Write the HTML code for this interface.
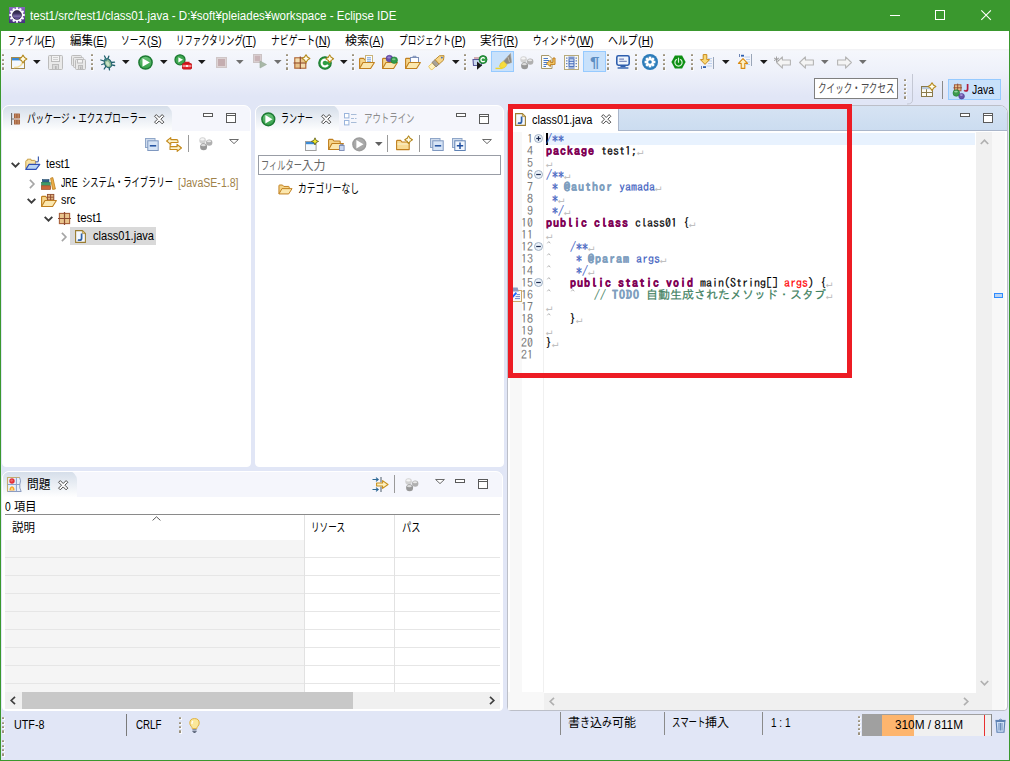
<!DOCTYPE html>
<html lang="ja">
<head>
<meta charset="utf-8">
<title>test1/src/test1/class01.java - Eclipse IDE</title>
<style>
*{box-sizing:border-box;margin:0;padding:0}
html,body{width:1010px;height:761px;overflow:hidden}
body{position:relative;background:#e1e6f6;font-family:"Liberation Sans","Noto Sans CJK JP",sans-serif;font-size:12px;color:#000}
.abs{position:absolute}
svg{position:absolute;overflow:visible}
.t{position:absolute;white-space:nowrap;line-height:16px;height:16px}
.r{display:inline-block;white-space:pre;transform-origin:0 50%;height:16px;vertical-align:top}
.panel{position:absolute;background:#fff;overflow:hidden}
.code{position:absolute;white-space:pre;font-family:"IPAGothic","Liberation Mono",monospace;font-size:12px;line-height:12px;height:12px;-webkit-text-stroke:0.2px}
.code b{letter-spacing:1px}
.kw{color:#7f0055}
.jd{color:#3f5fbf}
.jt{color:#7f9fbf}
.cm{color:#3f7f5f}
.pa{color:#ff0000}
.nl{color:#c0c0c0;font-size:11px}
.ln{color:#787878;-webkit-text-stroke:0}
.nl{-webkit-text-stroke:0}
</style>
</head>
<body>
<div class="abs" style="left:0px;top:0px;width:1010px;height:31px;background:#3a982e"></div>
<svg style="left:9px;top:7px" width="16" height="16" viewBox="0 0 16 16"><defs><linearGradient id="ecl" x1="0" y1="0" x2="0" y2="1"><stop offset="0" stop-color="#8468bc"/><stop offset="1" stop-color="#47307f"/></linearGradient><linearGradient id="ecl2" x1="0" y1="0" x2="0" y2="1"><stop offset="0" stop-color="#2a2240"/><stop offset="1" stop-color="#6a58a0"/></linearGradient></defs><rect width="16" height="16" fill="url(#ecl)"/><g transform="translate(8 8)"><rect x="-1.1" y="-7.7" width="2.2" height="3" fill="#fbfaff" transform="rotate(0)"/><rect x="-1.1" y="-7.7" width="2.2" height="3" fill="#fbfaff" transform="rotate(30)"/><rect x="-1.1" y="-7.7" width="2.2" height="3" fill="#fbfaff" transform="rotate(60)"/><rect x="-1.1" y="-7.7" width="2.2" height="3" fill="#fbfaff" transform="rotate(90)"/><rect x="-1.1" y="-7.7" width="2.2" height="3" fill="#fbfaff" transform="rotate(120)"/><rect x="-1.1" y="-7.7" width="2.2" height="3" fill="#fbfaff" transform="rotate(150)"/><rect x="-1.1" y="-7.7" width="2.2" height="3" fill="#fbfaff" transform="rotate(180)"/><rect x="-1.1" y="-7.7" width="2.2" height="3" fill="#fbfaff" transform="rotate(210)"/><rect x="-1.1" y="-7.7" width="2.2" height="3" fill="#fbfaff" transform="rotate(240)"/><rect x="-1.1" y="-7.7" width="2.2" height="3" fill="#fbfaff" transform="rotate(270)"/><rect x="-1.1" y="-7.7" width="2.2" height="3" fill="#fbfaff" transform="rotate(300)"/><rect x="-1.1" y="-7.7" width="2.2" height="3" fill="#fbfaff" transform="rotate(330)"/><circle r="6.2" fill="#fbfaff"/><circle r="4.5" fill="url(#ecl2)" stroke="#1e1830" stroke-width=".6"/><path d="M-4 0.2H4M-3.8 1.6H3.8" stroke="#9a8cc8" stroke-width=".6"/></g></svg>
<span class="t" style="left:30px;top:7.5px;color:#fff"><span class="r" style="width:366.5px;transform:scaleX(0.962)">test1/src/test1/class01.java - D:¥soft¥pleiades¥workspace - Eclipse IDE</span></span>
<svg style="left:890px;top:15px" width="11" height="1" viewBox="0 0 11 1"><rect width="10" height="1" fill="#fff"/></svg>
<svg style="left:935px;top:10px" width="10" height="10" viewBox="0 0 10 10"><rect x="0.5" y="0.5" width="9" height="9" fill="none" stroke="#fff"/></svg>
<svg style="left:981px;top:10px" width="10" height="10" viewBox="0 0 10 10"><path d="M0.3 0.3L9.9 9.9M9.9 0.3L0.3 9.9" stroke="#fff" stroke-width="1.1"/></svg>
<div class="abs" style="left:1px;top:31px;width:1008px;height:18px;background:#fff"></div>
<span class="t" style="left:7.5px;top:32.5px;"><span class="r" style="width:33.88px;transform:scaleX(0.706)">ファイル</span><span class="r" style="width:14.12px;transform:scaleX(0.920)">(<u>F</u>)</span></span>
<span class="t" style="left:70px;top:32.5px;"><span class="r" style="width:22.93px;transform:scaleX(0.955)">編集</span><span class="r" style="width:14.07px;transform:scaleX(0.878)">(<u>E</u>)</span></span>
<span class="t" style="left:121px;top:32.5px;"><span class="r" style="width:25.77px;transform:scaleX(0.728)">ソース</span><span class="r" style="width:14.73px;transform:scaleX(0.920)">(<u>S</u>)</span></span>
<span class="t" style="left:175.5px;top:32.5px;"><span class="r" style="width:66.88px;transform:scaleX(0.700)">リファクタリング</span><span class="r" style="width:14.12px;transform:scaleX(0.920)">(<u>T</u>)</span></span>
<span class="t" style="left:271px;top:32.5px;"><span class="r" style="width:44.16px;transform:scaleX(0.736)">ナビゲート</span><span class="r" style="width:15.34px;transform:scaleX(0.920)">(<u>N</u>)</span></span>
<span class="t" style="left:345px;top:32.5px;"><span class="r" style="width:24.17px;transform:scaleX(1.006)">検索</span><span class="r" style="width:14.83px;transform:scaleX(0.926)">(<u>A</u>)</span></span>
<span class="t" style="left:399px;top:32.5px;"><span class="r" style="width:51.77px;transform:scaleX(0.719)">プロジェクト</span><span class="r" style="width:14.73px;transform:scaleX(0.920)">(<u>P</u>)</span></span>
<span class="t" style="left:480px;top:32.5px;"><span class="r" style="width:23.49px;transform:scaleX(0.978)">実行</span><span class="r" style="width:15.01px;transform:scaleX(0.900)">(<u>R</u>)</span></span>
<span class="t" style="left:533px;top:32.5px;"><span class="r" style="width:42.72px;transform:scaleX(0.712)">ウィンドウ</span><span class="r" style="width:17.78px;transform:scaleX(0.920)">(<u>W</u>)</span></span>
<span class="t" style="left:608px;top:32.5px;"><span class="r" style="width:29.66px;transform:scaleX(0.824)">ヘルプ</span><span class="r" style="width:15.34px;transform:scaleX(0.920)">(<u>H</u>)</span></span>
<div class="abs" style="left:1px;top:49px;width:1008px;height:56px;background:linear-gradient(#f1f1f3 0,#f5f7fc 2px,#eef1fa 40%,#e1e6f6 85%)"></div>
<svg style="left:2px;top:54px" width="3" height="21" viewBox="0 0 3 21"><rect x="0.6" y="0.6" width="2.4" height="2.4" fill="#fafbfe"/><rect x="0" y="0" width="2" height="2" fill="#9a917e"/><rect x="0" y="0" width="2" height="0.8" fill="#b8b2a2"/><rect x="0.6" y="5.6" width="2.4" height="2.4" fill="#fafbfe"/><rect x="0" y="5" width="2" height="2" fill="#9a917e"/><rect x="0" y="5" width="2" height="0.8" fill="#b8b2a2"/><rect x="0.6" y="9.6" width="2.4" height="2.4" fill="#fafbfe"/><rect x="0" y="9" width="2" height="2" fill="#9a917e"/><rect x="0" y="9" width="2" height="0.8" fill="#b8b2a2"/><rect x="0.6" y="13.6" width="2.4" height="3.4" fill="#fafbfe"/><rect x="0" y="13" width="2" height="3" fill="#9a917e"/><rect x="0" y="13" width="2" height="0.8" fill="#b8b2a2"/></svg>
<svg style="left:10.5px;top:54.5px" width="16" height="16" viewBox="0 0 16 16"><rect x="0.5" y="2.5" width="13" height="11" fill="#f4f8fd" stroke="#a58a4a"/><rect x="1" y="3" width="12" height="2.4" fill="#3b8ad6"/><path d="M3 12.5C9 12.5 11.5 10 12 5.5" fill="none" stroke="#f3dd9a" stroke-width="1.6"/><g transform="translate(12 4)"><path d="M0 -3.8L1.5 -1.5L3.8 0L1.5 1.5L0 3.8L-1.5 1.5L-3.8 0L-1.5 -1.5Z" fill="#fbefb8" stroke="#b58a22" stroke-width="1.2" stroke-linejoin="round"/><path d="M0 -2.2V2.2M-2.2 0H2.2" stroke="#fffdf2" stroke-width="1.2"/></g></svg>
<svg style="left:33px;top:60px" width="8" height="4" viewBox="0 0 8 4"><path d="M0 0H7.6L3.8 4Z" fill="#1a1a1a"/></svg>
<svg style="left:48px;top:55px" width="15" height="15" viewBox="0 0 15 15"><path d="M1.5 0.5H13.5Q14.5 0.5 14.5 1.5V13.5Q14.5 14.5 13.5 14.5H1.5Q0.5 14.5 0.5 13.5V1.5Q0.5 0.5 1.5 0.5Z" fill="#e9e9e9" stroke="#bcbcbc"/><rect x="3.5" y="0.5" width="8" height="6" fill="#f3f3f3" stroke="#bcbcbc"/><path d="M5 2.5H10M5 4.5H10" stroke="#cfcfcf"/><rect x="4.5" y="9.5" width="6" height="5" fill="#dadada" stroke="#bcbcbc"/><rect x="7" y="11" width="1.6" height="3" fill="#b5b5b5"/></svg>
<svg style="left:71px;top:55px" width="15" height="15" viewBox="0 0 15 15"><g transform="translate(0 0)"><path d="M1.5 0.5H9.5Q10.5 0.5 10.5 1.5V9.5Q10.5 10.5 9.5 10.5H1.5Q0.5 10.5 0.5 9.5V1.5Q0.5 0.5 1.5 0.5Z" fill="#e9e9e9" stroke="#bcbcbc"/></g><g transform="translate(2 2)"><path d="M1.5 0.5H9.5Q10.5 0.5 10.5 1.5V9.5Q10.5 10.5 9.5 10.5H1.5Q0.5 10.5 0.5 9.5V1.5Q0.5 0.5 1.5 0.5Z" fill="#e9e9e9" stroke="#bcbcbc"/></g><g transform="translate(4 4)"><path d="M1.5 0.5H9.5Q10.5 0.5 10.5 1.5V9.5Q10.5 10.5 9.5 10.5H1.5Q0.5 10.5 0.5 9.5V1.5Q0.5 0.5 1.5 0.5Z" fill="#e9e9e9" stroke="#bcbcbc"/></g><rect x="6.5" y="4.5" width="5" height="3.5" fill="#f3f3f3" stroke="#bcbcbc"/><rect x="7.5" y="10.5" width="4" height="4" fill="#dadada" stroke="#bcbcbc"/><rect x="9" y="11.5" width="1.4" height="3" fill="#b5b5b5"/></svg>
<svg style="left:91px;top:54px" width="3" height="21" viewBox="0 0 3 21"><rect x="0.6" y="0.6" width="2.4" height="2.4" fill="#fafbfe"/><rect x="0" y="0" width="2" height="2" fill="#9a917e"/><rect x="0" y="0" width="2" height="0.8" fill="#b8b2a2"/><rect x="0.6" y="5.6" width="2.4" height="2.4" fill="#fafbfe"/><rect x="0" y="5" width="2" height="2" fill="#9a917e"/><rect x="0" y="5" width="2" height="0.8" fill="#b8b2a2"/><rect x="0.6" y="9.6" width="2.4" height="2.4" fill="#fafbfe"/><rect x="0" y="9" width="2" height="2" fill="#9a917e"/><rect x="0" y="9" width="2" height="0.8" fill="#b8b2a2"/><rect x="0.6" y="13.6" width="2.4" height="3.4" fill="#fafbfe"/><rect x="0" y="13" width="2" height="3" fill="#9a917e"/><rect x="0" y="13" width="2" height="0.8" fill="#b8b2a2"/></svg>
<svg style="left:99.5px;top:54.5px" width="16" height="16" viewBox="0 0 16 16"><g stroke="#1f5f6c" stroke-width="1.3" fill="none" stroke-linecap="round"><path d="M4.5 1L6 4M8.8 1.2L7.8 4"/><path d="M0.8 5L4.5 6.2M1.8 9.5L4.8 8.5M4.2 14L6 11.2"/><path d="M14.5 7.2L11.2 7.5M14.6 10.5L11.4 9.8M9.5 14.8L9 12"/></g><ellipse cx="8" cy="8.3" rx="3.4" ry="4.6" transform="rotate(-28 8 8.3)" fill="#86b492" stroke="#1f5f6c" stroke-width="1.1"/><ellipse cx="7.6" cy="8.6" rx="1.6" ry="2.6" transform="rotate(-28 8 8.3)" fill="#c9e2c4"/><circle cx="5.6" cy="4.4" r="1.5" fill="#3d7f86"/></svg>
<svg style="left:122px;top:60px" width="8" height="4" viewBox="0 0 8 4"><path d="M0 0H7.6L3.8 4Z" fill="#1a1a1a"/></svg>
<svg style="left:137.5px;top:54.5px" width="15.0" height="15.0" viewBox="0 0 15.0 15.0"><defs><linearGradient id="rg137" x1="0" y1="0" x2="0" y2="1"><stop offset="0" stop-color="#6cc47a"/><stop offset="1" stop-color="#35a04a"/></linearGradient></defs><circle cx="7.5" cy="7.5" r="6.6000000000000005" fill="url(#rg137)" stroke="#1c7a32" stroke-width="1.5"/><path d="M4.476 3.1799999999999997L11.82 7.5L4.476 11.82Z" fill="#fff"/></svg>
<svg style="left:160px;top:60px" width="8" height="4" viewBox="0 0 8 4"><path d="M0 0H7.6L3.8 4Z" fill="#1a1a1a"/></svg>
<svg style="left:174px;top:54px" width="18" height="15" viewBox="0 0 18 15"><circle cx="6" cy="5.8" r="5" fill="#3fa852" stroke="#1c7a32" stroke-width="1.3"/><path d="M4.4 3.2L9 5.8L4.4 8.4Z" fill="#fff"/><rect x="8.5" y="9.5" width="9" height="5.5" rx="1" fill="#e22128" stroke="#c1141a"/><path d="M11 9.5V8.3H15V9.5" fill="none" stroke="#d0181f" stroke-width="1.2"/><path d="M8.5 12H17.5" stroke="#fff" stroke-width="0.9"/><rect x="12.2" y="11" width="1.6" height="2" fill="#fff"/></svg>
<svg style="left:198px;top:60px" width="8" height="4" viewBox="0 0 8 4"><path d="M0 0H7.6L3.8 4Z" fill="#1a1a1a"/></svg>
<svg style="left:216px;top:57px" width="11" height="11" viewBox="0 0 11 11"><rect x="0.5" y="0.5" width="10" height="10" fill="#ddd3d4" stroke="#cfc6c7"/><rect x="2" y="2" width="7" height="7" fill="#c4adb0"/></svg>
<svg style="left:236px;top:60px" width="8" height="4" viewBox="0 0 8 4"><path d="M0 0H7.6L3.8 4Z" fill="#707070"/></svg>
<svg style="left:253px;top:54px" width="14" height="14" viewBox="0 0 14 14"><rect x="0.5" y="0.5" width="8" height="8" fill="#ddd3d4" stroke="#cbc3c4"/><rect x="1.8" y="1.8" width="5.4" height="5.4" fill="#c9b4b7"/><path d="M7 7L13.5 10.5L7 14Z" fill="#a9b8a8" stroke="#98a898" stroke-width=".6"/></svg>
<svg style="left:274px;top:60px" width="8" height="4" viewBox="0 0 8 4"><path d="M0 0H7.6L3.8 4Z" fill="#707070"/></svg>
<svg style="left:286px;top:54px" width="3" height="21" viewBox="0 0 3 21"><rect x="0.6" y="0.6" width="2.4" height="2.4" fill="#fafbfe"/><rect x="0" y="0" width="2" height="2" fill="#9a917e"/><rect x="0" y="0" width="2" height="0.8" fill="#b8b2a2"/><rect x="0.6" y="5.6" width="2.4" height="2.4" fill="#fafbfe"/><rect x="0" y="5" width="2" height="2" fill="#9a917e"/><rect x="0" y="5" width="2" height="0.8" fill="#b8b2a2"/><rect x="0.6" y="9.6" width="2.4" height="2.4" fill="#fafbfe"/><rect x="0" y="9" width="2" height="2" fill="#9a917e"/><rect x="0" y="9" width="2" height="0.8" fill="#b8b2a2"/><rect x="0.6" y="13.6" width="2.4" height="3.4" fill="#fafbfe"/><rect x="0" y="13" width="2" height="3" fill="#9a917e"/><rect x="0" y="13" width="2" height="0.8" fill="#b8b2a2"/></svg>
<svg style="left:294px;top:55px" width="16" height="14" viewBox="0 0 16 14"><rect x="0.8" y="2.8" width="11" height="10.4" fill="#e9c48c" stroke="#b06a3c" stroke-width="1.2"/><rect x="1.6" y="3.6" width="4" height="3.6" fill="#f3dcb0"/><rect x="7" y="8.6" width="4" height="3.8" fill="#f3dcb0"/><path d="M6.3 1.5V14M-0.5 8H12.5" stroke="#8e4a2e" stroke-width="1.1"/><g transform="translate(12 3.6)"><path d="M0 -3.8L1.5 -1.5L3.8 0L1.5 1.5L0 3.8L-1.5 1.5L-3.8 0L-1.5 -1.5Z" fill="#fbefb8" stroke="#b58a22" stroke-width="1.2" stroke-linejoin="round"/><path d="M0 -2.2V2.2M-2.2 0H2.2" stroke="#fffdf2" stroke-width="1.2"/></g></svg>
<svg style="left:318px;top:53.5px" width="17" height="16" viewBox="0 0 17 16"><circle cx="7" cy="9" r="6.2" fill="#2f9e44" stroke="#1a7a30" stroke-width="1.2"/><path d="M9.9 7.2A3.4 3.4 0 1 0 9.9 10.8" fill="none" stroke="#fff" stroke-width="2.1"/><g transform="translate(11.7 4.8)"><path d="M0 -3.8L1.5 -1.5L3.8 0L1.5 1.5L0 3.8L-1.5 1.5L-3.8 0L-1.5 -1.5Z" fill="#fbefb8" stroke="#b58a22" stroke-width="1.2" stroke-linejoin="round"/><path d="M0 -2.2V2.2M-2.2 0H2.2" stroke="#fffdf2" stroke-width="1.2"/></g></svg>
<svg style="left:340px;top:60px" width="8" height="4" viewBox="0 0 8 4"><path d="M0 0H7.6L3.8 4Z" fill="#1a1a1a"/></svg>
<svg style="left:352px;top:54px" width="3" height="21" viewBox="0 0 3 21"><rect x="0.6" y="0.6" width="2.4" height="2.4" fill="#fafbfe"/><rect x="0" y="0" width="2" height="2" fill="#9a917e"/><rect x="0" y="0" width="2" height="0.8" fill="#b8b2a2"/><rect x="0.6" y="5.6" width="2.4" height="2.4" fill="#fafbfe"/><rect x="0" y="5" width="2" height="2" fill="#9a917e"/><rect x="0" y="5" width="2" height="0.8" fill="#b8b2a2"/><rect x="0.6" y="9.6" width="2.4" height="2.4" fill="#fafbfe"/><rect x="0" y="9" width="2" height="2" fill="#9a917e"/><rect x="0" y="9" width="2" height="0.8" fill="#b8b2a2"/><rect x="0.6" y="13.6" width="2.4" height="3.4" fill="#fafbfe"/><rect x="0" y="13" width="2" height="3" fill="#9a917e"/><rect x="0" y="13" width="2" height="0.8" fill="#b8b2a2"/></svg>
<svg style="left:359px;top:55px" width="16" height="14" viewBox="0 0 16 14"><path d="M0.6 13.4V4.2Q0.6 3.4 1.4 3.4H4.6L6 5H11.4Q12.2 5 12.2 5.8V7.4" fill="#f6d58a" stroke="#c07f1e" stroke-width="1.1" stroke-linejoin="round"/><rect x="6.5" y="0.5" width="7" height="8.5" fill="#fdfdfd" stroke="#c9b37a"/><path d="M8 2.8H12M8 4.8H12M8 6.8H12" stroke="#4a86d6" stroke-width=".8"/><path d="M0.6 13.5L4 7.5H15.4L11.6 13.5Z" fill="#fbe7ae" stroke="#c07f1e" stroke-width="1.1" stroke-linejoin="round"/></svg>
<svg style="left:382px;top:55px" width="17" height="14" viewBox="0 0 17 14"><path d="M0.6 13.4V4.2Q0.6 3.4 1.4 3.4H4.6L6 5H11.4Q12.2 5 12.2 5.8V7.4" fill="#f6d58a" stroke="#c07f1e" stroke-width="1.1" stroke-linejoin="round"/><path d="M0.6 13.5L4 7.5H15.4L11.6 13.5Z" fill="#fbe7ae" stroke="#c07f1e" stroke-width="1.1" stroke-linejoin="round"/><circle cx="7.4" cy="3.6" r="3.3" fill="#6a4fb0" stroke="#4b3790" stroke-width=".6"/><ellipse cx="7" cy="2.6" rx="1.8" ry="1" fill="#a796dc" opacity=".8"/><circle cx="12.2" cy="5.2" r="3.3" fill="#2f9a4a" stroke="#1c7a32" stroke-width=".6"/><ellipse cx="11.8" cy="4.2" rx="1.8" ry="1" fill="#8ed09b" opacity=".8"/></svg>
<svg style="left:405px;top:55px" width="16" height="14" viewBox="0 0 16 14"><path d="M0.6 13.4V4.2Q0.6 3.4 1.4 3.4H4.6L6 5H11.4Q12.2 5 12.2 5.8V7.4" fill="#f6d58a" stroke="#c07f1e" stroke-width="1.1" stroke-linejoin="round"/><rect x="5.5" y="2.5" width="8" height="6" fill="#fdfdff" stroke="#7b8fb8"/><path d="M8 2.5V1.3H11V2.5" fill="none" stroke="#7b8fb8"/><path d="M0.6 13.5L4 7.5H15.4L11.6 13.5Z" fill="#fbe7ae" stroke="#c07f1e" stroke-width="1.1" stroke-linejoin="round"/></svg>
<svg style="left:429px;top:54px" width="17" height="15" viewBox="0 0 17 15"><g transform="rotate(-42 8 8)"><path d="M-1 5.6H4V10.4H-1Q-2.4 8 -1 5.6Z" fill="#fff3c4" stroke="#e8c25a" stroke-width=".8"/><rect x="4" y="5" width="4.2" height="6" fill="#a8a39b" stroke="#8a7a5c" stroke-width=".8"/><path d="M8.2 5H14L17.5 8L14 11H8.2Z" fill="#f7d58a" stroke="#b98a2e" stroke-width=".9"/><circle cx="14.6" cy="8" r="0.9" fill="#3d6fc0"/></g></svg>
<svg style="left:452px;top:60px" width="8" height="4" viewBox="0 0 8 4"><path d="M0 0H7.6L3.8 4Z" fill="#1a1a1a"/></svg>
<svg style="left:464px;top:54px" width="3" height="21" viewBox="0 0 3 21"><rect x="0.6" y="0.6" width="2.4" height="2.4" fill="#fafbfe"/><rect x="0" y="0" width="2" height="2" fill="#9a917e"/><rect x="0" y="0" width="2" height="0.8" fill="#b8b2a2"/><rect x="0.6" y="5.6" width="2.4" height="2.4" fill="#fafbfe"/><rect x="0" y="5" width="2" height="2" fill="#9a917e"/><rect x="0" y="5" width="2" height="0.8" fill="#b8b2a2"/><rect x="0.6" y="9.6" width="2.4" height="2.4" fill="#fafbfe"/><rect x="0" y="9" width="2" height="2" fill="#9a917e"/><rect x="0" y="9" width="2" height="0.8" fill="#b8b2a2"/><rect x="0.6" y="13.6" width="2.4" height="3.4" fill="#fafbfe"/><rect x="0" y="13" width="2" height="3" fill="#9a917e"/><rect x="0" y="13" width="2" height="0.8" fill="#b8b2a2"/></svg>
<svg style="left:472px;top:54.5px" width="16" height="15" viewBox="0 0 16 15"><path d="M1 4.5H9.5V10.5H1.5Z" fill="#c9d7f0" stroke="#5a5a9a" stroke-width="1.1"/><path d="M2 3H8.5" stroke="#c99aa0" stroke-width="1.6"/><path d="M5 6.5L10 10.5L5 14.8Z" fill="#1a1a1a"/><circle cx="11" cy="4.6" r="4" fill="#2f9e44" stroke="#1a7a30" stroke-width=".9"/><path d="M12.6 3.6A2 2 0 1 0 12.6 5.8" fill="none" stroke="#fff" stroke-width="1.3"/></svg>
<div class="abs" style="left:491px;top:51px;width:23px;height:21px;background:#c8e1fb;border:1px solid #96caff"></div>
<svg style="left:494.5px;top:53px" width="18" height="17" viewBox="0 0 18 17"><path d="M15.5 0.5L16.5 9.5L11.5 11.2L8.5 8.2Z" fill="#8f8a80" stroke="#a49f94" stroke-width=".6"/><path d="M13 4L14.5 9" stroke="#bdb8ad" stroke-width="1"/><path d="M8.5 8.2L11.8 11.4Q10.5 15.5 6.5 15.2L4.4 13.4Q5 9.8 8.5 8.2Z" fill="#f6dc3c" stroke="#e2c324" stroke-width=".6"/><path d="M0.5 15.4H7.5" stroke="#f0d22a" stroke-width="1.4"/></svg>
<svg style="left:519.5px;top:55.5px" width="14" height="14" viewBox="0 0 14 14"><circle cx="3.6" cy="3.6" r="3.3" fill="#d2d2d2"/><ellipse cx="3.4" cy="2.4" rx="2.2" ry="1.1" fill="#f6f6f6"/><circle cx="10.2" cy="5.6" r="3.2" fill="#b0b0b0"/><ellipse cx="10" cy="4.2" rx="2.1" ry="1" fill="#e8e8e8"/><circle cx="4.6" cy="9.8" r="3.5" fill="#989898"/><ellipse cx="4.4" cy="8.2" rx="2.4" ry="1.1" fill="#dcdcdc"/></svg>
<svg style="left:540.5px;top:54.5px" width="16" height="15" viewBox="0 0 16 15"><path d="M0.5 0.5H8L11 3.5V13.5H0.5Z" fill="#fbfbf6" stroke="#a8986a"/><path d="M2.5 3.5H7M2.5 5.5H8M2.5 7.5H6M2.5 9.5H6M2.5 11.5H5" stroke="#4a7ac8" stroke-width="1"/><path d="M14 3V9.4H9.4V11.6L5.6 8.4L9.4 5.2V7.4H12V3Z" fill="#f7d070" stroke="#c07f1e" stroke-width="1" stroke-linejoin="round"/></svg>
<svg style="left:564px;top:55px" width="15" height="15" viewBox="0 0 15 15"><rect x="0.5" y="0.5" width="14" height="14" fill="#fbfaf4" stroke="#b7aa7c"/><path d="M2.8 2.5V13M12.2 2.5V13" stroke="#3f67b8" stroke-width="1.2" stroke-dasharray="1.2 1.6"/><rect x="5" y="3.8" width="5" height="7.6" fill="#dfe8f8" stroke="#3f67b8" stroke-width="1"/><path d="M5 6.3H10M5 8.8H10M4.4 2.2H10.6M4.4 13H10.6" stroke="#3f67b8" stroke-width="1"/></svg>
<div class="abs" style="left:583px;top:51px;width:23px;height:21px;background:#c8e1fb;border:1px solid #96caff"></div>
<span class="t" style="left:590px;top:54px;color:#5c8ec2;font-weight:bold;font-size:14px"><span class="r" style="width:9.5px;transform:scaleX(1.218)">¶</span></span>
<svg style="left:607px;top:54px" width="3" height="21" viewBox="0 0 3 21"><rect x="0.6" y="0.6" width="2.4" height="2.4" fill="#fafbfe"/><rect x="0" y="0" width="2" height="2" fill="#9a917e"/><rect x="0" y="0" width="2" height="0.8" fill="#b8b2a2"/><rect x="0.6" y="5.6" width="2.4" height="2.4" fill="#fafbfe"/><rect x="0" y="5" width="2" height="2" fill="#9a917e"/><rect x="0" y="5" width="2" height="0.8" fill="#b8b2a2"/><rect x="0.6" y="9.6" width="2.4" height="2.4" fill="#fafbfe"/><rect x="0" y="9" width="2" height="2" fill="#9a917e"/><rect x="0" y="9" width="2" height="0.8" fill="#b8b2a2"/><rect x="0.6" y="13.6" width="2.4" height="3.4" fill="#fafbfe"/><rect x="0" y="13" width="2" height="3" fill="#9a917e"/><rect x="0" y="13" width="2" height="0.8" fill="#b8b2a2"/></svg>
<svg style="left:616px;top:55px" width="14" height="14" viewBox="0 0 14 14"><rect x="0.8" y="0.8" width="12.4" height="9.4" rx="1.6" fill="#eef4fc" stroke="#2f5fae" stroke-width="1.6"/><path d="M3.2 4.1H8M3.2 6.3H10.8" stroke="#3a4f9a" stroke-width=".8"/><path d="M4.8 10.6H9.2L9.8 12.2H4.2Z" fill="#2f5fae"/><path d="M1.6 13H12.4" stroke="#2f5fae" stroke-width="1.4"/></svg>
<svg style="left:635px;top:54px" width="3" height="21" viewBox="0 0 3 21"><rect x="0.6" y="0.6" width="2.4" height="2.4" fill="#fafbfe"/><rect x="0" y="0" width="2" height="2" fill="#9a917e"/><rect x="0" y="0" width="2" height="0.8" fill="#b8b2a2"/><rect x="0.6" y="5.6" width="2.4" height="2.4" fill="#fafbfe"/><rect x="0" y="5" width="2" height="2" fill="#9a917e"/><rect x="0" y="5" width="2" height="0.8" fill="#b8b2a2"/><rect x="0.6" y="9.6" width="2.4" height="2.4" fill="#fafbfe"/><rect x="0" y="9" width="2" height="2" fill="#9a917e"/><rect x="0" y="9" width="2" height="0.8" fill="#b8b2a2"/><rect x="0.6" y="13.6" width="2.4" height="3.4" fill="#fafbfe"/><rect x="0" y="13" width="2" height="3" fill="#9a917e"/><rect x="0" y="13" width="2" height="0.8" fill="#b8b2a2"/></svg>
<svg style="left:642px;top:54px" width="16" height="16" viewBox="0 0 16 16"><circle cx="8" cy="8" r="8" fill="#2c7cba"/><g transform="translate(8 8)"><rect x="-1.3" y="-5.4" width="2.6" height="3" fill="#fff" transform="rotate(0)"/><rect x="-1.3" y="-5.4" width="2.6" height="3" fill="#fff" transform="rotate(45)"/><rect x="-1.3" y="-5.4" width="2.6" height="3" fill="#fff" transform="rotate(90)"/><rect x="-1.3" y="-5.4" width="2.6" height="3" fill="#fff" transform="rotate(135)"/><rect x="-1.3" y="-5.4" width="2.6" height="3" fill="#fff" transform="rotate(180)"/><rect x="-1.3" y="-5.4" width="2.6" height="3" fill="#fff" transform="rotate(225)"/><rect x="-1.3" y="-5.4" width="2.6" height="3" fill="#fff" transform="rotate(270)"/><rect x="-1.3" y="-5.4" width="2.6" height="3" fill="#fff" transform="rotate(315)"/><circle r="3.7" fill="#fff"/><circle r="1.8" fill="#2c7cba"/></g></svg>
<svg style="left:663px;top:54px" width="3" height="21" viewBox="0 0 3 21"><rect x="0.6" y="0.6" width="2.4" height="2.4" fill="#fafbfe"/><rect x="0" y="0" width="2" height="2" fill="#9a917e"/><rect x="0" y="0" width="2" height="0.8" fill="#b8b2a2"/><rect x="0.6" y="5.6" width="2.4" height="2.4" fill="#fafbfe"/><rect x="0" y="5" width="2" height="2" fill="#9a917e"/><rect x="0" y="5" width="2" height="0.8" fill="#b8b2a2"/><rect x="0.6" y="9.6" width="2.4" height="2.4" fill="#fafbfe"/><rect x="0" y="9" width="2" height="2" fill="#9a917e"/><rect x="0" y="9" width="2" height="0.8" fill="#b8b2a2"/><rect x="0.6" y="13.6" width="2.4" height="3.4" fill="#fafbfe"/><rect x="0" y="13" width="2" height="3" fill="#9a917e"/><rect x="0" y="13" width="2" height="0.8" fill="#b8b2a2"/></svg>
<svg style="left:670.5px;top:55px" width="15" height="14" viewBox="0 0 15 14"><path d="M3.9 0.5H11.1L14.6 7L11.1 13.5H3.9L0.4 7Z" fill="#0e8f14"/><path d="M5.4 4.6A3.6 3.6 0 1 0 9.6 4.6" fill="none" stroke="#d8f5d8" stroke-width="1.2" stroke-linecap="round"/><path d="M7.5 3V7.2" stroke="#d8f5d8" stroke-width="1.2" stroke-linecap="round"/></svg>
<svg style="left:691px;top:54px" width="3" height="21" viewBox="0 0 3 21"><rect x="0.6" y="0.6" width="2.4" height="2.4" fill="#fafbfe"/><rect x="0" y="0" width="2" height="2" fill="#9a917e"/><rect x="0" y="0" width="2" height="0.8" fill="#b8b2a2"/><rect x="0.6" y="5.6" width="2.4" height="2.4" fill="#fafbfe"/><rect x="0" y="5" width="2" height="2" fill="#9a917e"/><rect x="0" y="5" width="2" height="0.8" fill="#b8b2a2"/><rect x="0.6" y="9.6" width="2.4" height="2.4" fill="#fafbfe"/><rect x="0" y="9" width="2" height="2" fill="#9a917e"/><rect x="0" y="9" width="2" height="0.8" fill="#b8b2a2"/><rect x="0.6" y="13.6" width="2.4" height="3.4" fill="#fafbfe"/><rect x="0" y="13" width="2" height="3" fill="#9a917e"/><rect x="0" y="13" width="2" height="0.8" fill="#b8b2a2"/></svg>
<svg style="left:700px;top:54px" width="15" height="15" viewBox="0 0 15 15"><path d="M13.5 3V15" stroke="#9aa6b8" stroke-width="1"/><path d="M8 4.5H12M8 7H12M8 9.5H12M6.5 12H12" stroke="#bcd0ee" stroke-width="1"/><path d="M1.5 12V15" stroke="#6f86b4"/><rect x="3" y="12.2" width="3" height="1.8" fill="#2f5fae"/><path d="M3.2 0.6H6.8V5.6H9.6L5 10.4L0.4 5.6H3.2Z" fill="#f9d978" stroke="#c98a1a" stroke-width="1" stroke-linejoin="round"/></svg>
<svg style="left:722px;top:60px" width="8" height="4" viewBox="0 0 8 4"><path d="M0 0H7.6L3.8 4Z" fill="#1a1a1a"/></svg>
<svg style="left:738px;top:54px" width="15" height="15" viewBox="0 0 15 15"><path d="M13.5 0V12" stroke="#9aa6b8" stroke-width="1"/><path d="M6.5 3H12M8 5.5H12M8 8H12M8 10.5H12" stroke="#bcd0ee" stroke-width="1"/><path d="M1.5 0V3" stroke="#6f86b4"/><rect x="3" y="0.8" width="3" height="1.8" fill="#2f5fae"/><path d="M3.2 14.4H6.8V9.4H9.6L5 4.6L0.4 9.4H3.2Z" fill="#fdf1c8" stroke="#d98a10" stroke-width="1.1" stroke-linejoin="round"/></svg>
<svg style="left:760px;top:60px" width="8" height="4" viewBox="0 0 8 4"><path d="M0 0H7.6L3.8 4Z" fill="#1a1a1a"/></svg>
<svg style="left:774px;top:55.5px" width="17" height="13" viewBox="0 0 17 13"><g transform="translate(2 0)"><path d="M0.6 6.5L6.4 0.8V4H14.4V9H6.4V12.2Z" fill="#f4f4f4" stroke="#b4b4b4" stroke-width="1.1" stroke-linejoin="round"/></g><path d="M2.5 0.5V6M0 2L5 4.6M5 2L0 4.6" stroke="#9a9a9a" stroke-width=".9"/></svg>
<svg style="left:798.5px;top:55.5px" width="17" height="13" viewBox="0 0 17 13"><path d="M0.6 6.5L6.4 0.8V4H14.4V9H6.4V12.2Z" fill="#f4f4f4" stroke="#b4b4b4" stroke-width="1.1" stroke-linejoin="round"/></svg>
<svg style="left:821px;top:60px" width="8" height="4" viewBox="0 0 8 4"><path d="M0 0H7.6L3.8 4Z" fill="#707070"/></svg>
<svg style="left:836.5px;top:55.5px" width="17" height="13" viewBox="0 0 17 13"><g transform="translate(15 0) scale(-1 1)"><path d="M0.6 6.5L6.4 0.8V4H14.4V9H6.4V12.2Z" fill="#f4f4f4" stroke="#b4b4b4" stroke-width="1.1" stroke-linejoin="round"/></g></svg>
<svg style="left:859px;top:60px" width="8" height="4" viewBox="0 0 8 4"><path d="M0 0H7.6L3.8 4Z" fill="#707070"/></svg>
<div class="abs" style="left:814px;top:78px;width:84px;height:21px;background:#fff;border:1px solid #7f7f7f"></div>
<span class="t" style="left:818px;top:80.5px;color:#4a4a4a"><span class="r" style="width:76.5px;transform:scaleX(0.714)">クイック・アクセス</span></span>
<svg style="left:904px;top:79px" width="3" height="25" viewBox="0 0 3 25"><rect x="0.6" y="0.6" width="2.4" height="2.4" fill="#fafbfe"/><rect x="0" y="0" width="2" height="2" fill="#9a917e"/><rect x="0" y="0" width="2" height="0.8" fill="#b8b2a2"/><rect x="0.6" y="5.6" width="2.4" height="2.4" fill="#fafbfe"/><rect x="0" y="5" width="2" height="2" fill="#9a917e"/><rect x="0" y="5" width="2" height="0.8" fill="#b8b2a2"/><rect x="0.6" y="9.6" width="2.4" height="2.4" fill="#fafbfe"/><rect x="0" y="9" width="2" height="2" fill="#9a917e"/><rect x="0" y="9" width="2" height="0.8" fill="#b8b2a2"/><rect x="0.6" y="13.6" width="2.4" height="2.4" fill="#fafbfe"/><rect x="0" y="13" width="2" height="2" fill="#9a917e"/><rect x="0" y="13" width="2" height="0.8" fill="#b8b2a2"/><rect x="0.6" y="17.6" width="2.4" height="3.4" fill="#fafbfe"/><rect x="0" y="17" width="2" height="3" fill="#9a917e"/><rect x="0" y="17" width="2" height="0.8" fill="#b8b2a2"/></svg>
<svg style="left:907px;top:74px" width="6" height="30" viewBox="0 0 6 30"><path d="M5.5 0V26Q5.5 30 0 30" fill="none" stroke="#c4c8d4" stroke-width="1"/></svg>
<svg style="left:920.5px;top:83px" width="15" height="14" viewBox="0 0 15 14"><rect x="0.5" y="3.5" width="11" height="10" fill="#fbfaf2" stroke="#8a7a4a"/><rect x="1" y="4" width="10" height="2.2" fill="#b8c8dc"/><path d="M0.5 9.5H11.5M5.5 6.2V13.5" stroke="#8a7a4a"/><g transform="translate(11 3.6)"><path d="M0 -3.8L1.5 -1.5L3.8 0L1.5 1.5L0 3.8L-1.5 1.5L-3.8 0L-1.5 -1.5Z" fill="#fbefb8" stroke="#b58a22" stroke-width="1.2" stroke-linejoin="round"/><path d="M0 -2.2V2.2M-2.2 0H2.2" stroke="#fffdf2" stroke-width="1.2"/></g></svg>
<div class="abs" style="left:942px;top:81px;width:1px;height:18px;background:#8a8a8a"></div>
<div class="abs" style="left:948px;top:79px;width:53px;height:21px;background:#c8e1fb;border:1px solid #96caff"></div>
<svg style="left:951.5px;top:81.5px" width="18" height="17" viewBox="0 0 18 17"><rect x="2.4" y="2.8" width="6.6" height="6" fill="#e8c08c" stroke="#9a5030" stroke-width=".9"/><path d="M5.7 1.6V9.8M1.4 5.8H10" stroke="#8e4a2e" stroke-width=".9"/><circle cx="4.3" cy="11" r="3.3" fill="#3c9a4e" stroke="#1c7a32" stroke-width=".6"/><ellipse cx="4" cy="9.6" rx="1.9" ry=".9" fill="#a4dcae" opacity=".85"/><circle cx="9.6" cy="14.2" r="2.8" fill="#6a55a8" stroke="#4b3790" stroke-width=".6"/><ellipse cx="9.3" cy="13.1" rx="1.6" ry=".8" fill="#b4a6e0" opacity=".85"/><path d="M15.6 2V7Q15.6 9 13.8 9Q12.8 9 12.2 8.2" fill="none" stroke="#b01c3c" stroke-width="1.7"/></svg>
<span class="t" style="left:972px;top:81.5px;"><span class="r" style="width:22px;transform:scaleX(0.868)">Java</span></span>
<div class="panel" style="left:2px;top:105px;width:249px;height:362px;border-radius:7px 7px 4px 4px;border:1px solid #fff"><div class="abs" style="left:0;top:0;right:0;height:25px;background:#f5f6fc"></div><div class="abs" style="left:-1px;top:-1px;width:170px;height:27px;background:linear-gradient(#d4dde9,#fff 98%);border-radius:7px 9px 0 0"></div></div>
<svg style="left:11px;top:113px" width="9" height="12" viewBox="0 0 9 12"><path d="M0.6 0V12" stroke="#6a6a6a" stroke-width="1.1"/><path d="M0.6 6H3" stroke="#6a6a6a"/><rect x="3.4" y="1" width="5" height="4" fill="#d9a77a" stroke="#a05a34" stroke-width=".9"/><rect x="3.4" y="7" width="5" height="4" fill="#d9a77a" stroke="#a05a34" stroke-width=".9"/><path d="M5.9 1V5M5.9 7V11M3.4 3H8.4M3.4 9H8.4" stroke="#8e4a2e" stroke-width=".7"/></svg>
<span class="t" style="left:27px;top:111px;"><span class="r" style="width:119.5px;transform:scaleX(0.714)">パッケージ・エクスプローラー</span></span>
<svg style="left:153.6px;top:113.8px" width="10.4" height="10.4" viewBox="0 0 11 11"><path d="M0.6 2.4L2.4 0.6L5.5 3.7L8.6 0.6L10.4 2.4L7.3 5.5L10.4 8.6L8.6 10.4L5.5 7.3L2.4 10.4L0.6 8.6L3.7 5.5Z" fill="#fff" stroke="#484848" stroke-width="1.05" stroke-linejoin="miter"/></svg>
<svg style="left:203px;top:112.5px" width="10" height="4" viewBox="0 0 10 4"><rect x="0.5" y="0.5" width="9" height="3" fill="#fff" stroke="#5a5a5a"/></svg>
<svg style="left:226px;top:113px" width="10" height="10" viewBox="0 0 10 10"><rect x="0.5" y="0.5" width="9" height="9" fill="#fff" stroke="#5a5a5a"/><path d="M0.5 2.5H9.5" stroke="#5a5a5a"/></svg>
<svg style="left:144.8px;top:137.7px" width="14" height="13" viewBox="0 0 14 13"><rect x="0.5" y="0.5" width="9.5" height="9" fill="#cfdcee" stroke="#8fa6c8"/><rect x="2.8" y="2.8" width="10.4" height="9.7" fill="#d6e4f6" stroke="#7f98c0"/><path d="M4.8 7.8H11.2" stroke="#1f4f9f" stroke-width="1.5"/></svg>
<svg style="left:166.3px;top:136.6px" width="16" height="15" viewBox="0 0 16 15"><path d="M0.6 4L4.8 0.6V2.6H10.4Q12 2.6 12 4.2V5.4H4.8V7.4Z" fill="#fdf3cc" stroke="#c48a1c" stroke-width="1.05" stroke-linejoin="round"/><path d="M15.4 11L11.2 7.6V9.6H5.6Q4 9.6 4 8V7.2" fill="none" stroke="#c48a1c" stroke-width="1.05"/><path d="M15.4 11L11.2 7.6V9.6H4V12.4H11.2V14.4Z" fill="#fdf3cc" stroke="#c48a1c" stroke-width="1.05" stroke-linejoin="round"/></svg>
<div class="abs" style="left:188px;top:135px;width:1px;height:17px;background:#9a9a9a"></div>
<svg style="left:198.6px;top:137.4px" width="14" height="14" viewBox="0 0 14 14"><circle cx="3.6" cy="3.6" r="3.3" fill="#d2d2d2"/><ellipse cx="3.4" cy="2.4" rx="2.2" ry="1.1" fill="#f6f6f6"/><circle cx="10.2" cy="5.6" r="3.2" fill="#b0b0b0"/><ellipse cx="10" cy="4.2" rx="2.1" ry="1" fill="#e8e8e8"/><circle cx="4.6" cy="9.8" r="3.5" fill="#989898"/><ellipse cx="4.4" cy="8.2" rx="2.4" ry="1.1" fill="#dcdcdc"/></svg>
<svg style="left:229px;top:138.9px" width="10" height="5" viewBox="0 0 10 5"><path d="M0.6 0.5H9.4L5 4.6Z" fill="#fff" stroke="#5a5a5a" stroke-width=".9" stroke-linejoin="round"/></svg>
<svg style="left:11px;top:161.5px" width="9" height="6" viewBox="0 0 9 6"><path d="M0.7 0.9L4.5 4.7L8.3 0.9" fill="none" stroke="#3c3c3c" stroke-width="1.9"/></svg>
<svg style="left:24.5px;top:156px" width="16" height="14" viewBox="0 0 16 14"><path d="M0.8 12.6V5.2Q0.8 4.4 1.6 4.4H2.4V3.2H6V4.4H9.6Q10.4 4.4 10.4 5.2V8" fill="#f8e2a4" stroke="#c9a048" stroke-width="1" stroke-linejoin="round"/><path d="M0.8 13.4L4 8.4H14.8L11 13.4Z" fill="#b9d4f4" stroke="#2f4fb4" stroke-width="1.1" stroke-linejoin="round"/><path d="M13.4 0.4V4.4Q13.4 6 11.8 6Q11 6 10.6 5.4" fill="none" stroke="#3f5fb0" stroke-width="1.2"/></svg>
<span class="t" style="left:45.5px;top:156px;"><span class="r" style="width:24px;transform:scaleX(0.923)">test1</span></span>
<svg style="left:28.5px;top:178.5px" width="6" height="10" viewBox="0 0 6 10"><path d="M0.9 0.8L4.9 5L0.9 9.2" fill="none" stroke="#a6a6a6" stroke-width="1.7"/></svg>
<svg style="left:41px;top:176.5px" width="15" height="13" viewBox="0 0 15 13"><rect x="1.4" y="2.6" width="6.6" height="2.6" fill="#2f5f8a" stroke="#244a6a" stroke-width=".6"/><rect x="0.6" y="5.4" width="8.6" height="3" fill="#3f9a6a" stroke="#2a7a4a" stroke-width=".6"/><rect x="0.4" y="8.8" width="9.2" height="3.6" fill="#c8663a" stroke="#9a4a24" stroke-width=".7"/><path d="M9.6 1.2L11.8 0.6L14.4 12L11.6 12.4Z" fill="#eeb04a" stroke="#b87a1a" stroke-width=".8" stroke-linejoin="round"/></svg>
<span class="t" style="left:61px;top:174.5px;"><span class="r" style="width:16.5px;transform:scaleX(0.728)">JRE</span></span>
<span class="t" style="left:82px;top:174.5px;"><span class="r" style="width:91px;transform:scaleX(0.691)">システム・ライブラリー</span></span>
<span class="t" style="left:177.5px;top:174.5px;color:#a0824a"><span class="r" style="width:60.5px;transform:scaleX(0.881)">[JavaSE-1.8]</span></span>
<svg style="left:27px;top:197.5px" width="9" height="6" viewBox="0 0 9 6"><path d="M0.7 0.9L4.5 4.7L8.3 0.9" fill="none" stroke="#3c3c3c" stroke-width="1.9"/></svg>
<svg style="left:41px;top:193px" width="16" height="14" viewBox="0 0 16 14"><path d="M0.6 13.4V4.2Q0.6 3.4 1.4 3.4H4.6L6 5H11.4Q12.2 5 12.2 5.8V7.4" fill="#f6d58a" stroke="#c07f1e" stroke-width="1.1" stroke-linejoin="round"/><g stroke="#8e4a2e" stroke-width=".9" fill="#e4b884"><rect x="6.4" y="1.4" width="6.4" height="5.6"/><path d="M9.6 1.4V7M6.4 4.2H12.8" fill="none"/></g><path d="M0.6 13.5L4 7.5H15.4L11.6 13.5Z" fill="#fbe7ae" stroke="#c07f1e" stroke-width="1.1" stroke-linejoin="round"/></svg>
<span class="t" style="left:61px;top:192px;"><span class="r" style="width:14.5px;transform:scaleX(0.906)">src</span></span>
<svg style="left:43.5px;top:215.5px" width="9" height="6" viewBox="0 0 9 6"><path d="M0.7 0.9L4.5 4.7L8.3 0.9" fill="none" stroke="#3c3c3c" stroke-width="1.9"/></svg>
<svg style="left:57.5px;top:211.5px" width="13" height="13" viewBox="0 0 13 13"><rect x="1.4" y="1.4" width="10.2" height="10.2" fill="#e9c48c" stroke="#a8603a" stroke-width="1.1"/><path d="M6.5 0V13M0 6.5H13" stroke="#8e4a2e" stroke-width="1.2"/></svg>
<span class="t" style="left:77px;top:210px;"><span class="r" style="width:25px;transform:scaleX(0.961)">test1</span></span>
<svg style="left:61px;top:232px" width="6" height="10" viewBox="0 0 6 10"><path d="M0.9 0.8L4.9 5L0.9 9.2" fill="none" stroke="#a6a6a6" stroke-width="1.7"/></svg>
<div class="abs" style="left:70px;top:227px;width:86px;height:18px;background:#d9d9d9"></div>
<svg style="left:74.5px;top:229.5px" width="11" height="13" viewBox="0 0 11 13"><path d="M0.6 0.6H7.4L10.4 3.6V12.4H0.6Z" fill="#f4f8fe" stroke="#9a7c30" stroke-width="1.1"/><path d="M7.4 0.6V3.6H10.4Z" fill="#e8c878" stroke="#9a7c30" stroke-width=".6"/><path d="M6.6 3.6V8.2Q6.6 10.2 4.6 10.2Q3.6 10.2 3 9.6" fill="none" stroke="#2f62a8" stroke-width="1.7"/></svg>
<span class="t" style="left:93px;top:228px;"><span class="r" style="width:61px;transform:scaleX(0.924)">class01.java</span></span>
<div class="panel" style="left:255px;top:105px;width:249px;height:362px;border-radius:7px 7px 4px 4px;border:1px solid #fff"><div class="abs" style="left:0;top:0;right:0;height:25px;background:#f5f6fc"></div><div class="abs" style="left:-1px;top:-1px;width:84px;height:27px;background:linear-gradient(#d4dde9,#fff 98%);border-radius:7px 9px 0 0"></div></div>
<svg style="left:260.5px;top:111.5px" width="14.6" height="14.6" viewBox="0 0 14.6 14.6"><defs><linearGradient id="rg260" x1="0" y1="0" x2="0" y2="1"><stop offset="0" stop-color="#6cc47a"/><stop offset="1" stop-color="#35a04a"/></linearGradient></defs><circle cx="7.3" cy="7.3" r="6.4" fill="url(#rg260)" stroke="#1c7a32" stroke-width="1.5"/><path d="M4.359999999999999 3.0999999999999996L11.5 7.3L4.359999999999999 11.5Z" fill="#fff"/></svg>
<span class="t" style="left:280.5px;top:111px;"><span class="r" style="width:32px;transform:scaleX(0.666)">ランナー</span></span>
<svg style="left:320.6px;top:113.8px" width="10.4" height="10.4" viewBox="0 0 11 11"><path d="M0.6 2.4L2.4 0.6L5.5 3.7L8.6 0.6L10.4 2.4L7.3 5.5L10.4 8.6L8.6 10.4L5.5 7.3L2.4 10.4L0.6 8.6L3.7 5.5Z" fill="#fff" stroke="#484848" stroke-width="1.05" stroke-linejoin="miter"/></svg>
<svg style="left:344px;top:113px" width="13" height="13" viewBox="0 0 13 13"><rect x="0.5" y="0.5" width="4.4" height="4.4" fill="#fff" stroke="#9ab4dc"/><rect x="0.5" y="7.5" width="4.4" height="4.4" fill="#fff" stroke="#9ab4dc"/><path d="M7 1.5H12.5M7 5.5H10M11 5.5H12.5M7 9.5H12.5" stroke="#a8bcd8" stroke-width="1.1"/></svg>
<span class="t" style="left:363.5px;top:111px;color:#8c8c8c"><span class="r" style="width:50.5px;transform:scaleX(0.701)">アウトライン</span></span>
<svg style="left:456px;top:113px" width="10" height="4" viewBox="0 0 10 4"><rect x="0.5" y="0.5" width="9" height="3" fill="#fff" stroke="#5a5a5a"/></svg>
<svg style="left:479px;top:113.5px" width="10" height="10" viewBox="0 0 10 10"><rect x="0.5" y="0.5" width="9" height="9" fill="#fff" stroke="#5a5a5a"/><path d="M0.5 2.5H9.5" stroke="#5a5a5a"/></svg>
<svg style="left:305px;top:138px" width="14" height="13" viewBox="0 0 14 13"><rect x="0.5" y="3.5" width="10.6" height="9" fill="#f4f8fd" stroke="#a0a0a0"/><rect x="1" y="4" width="9.6" height="2.2" fill="#3b8ad6"/><g transform="translate(10 3.4)"><path d="M0 -3.6L1.1 -1.1L3.6 0L1.1 1.1L0 3.6L-1.1 1.1L-3.6 0L-1.1 -1.1Z" fill="#f0e82a" stroke="#5a5a14" stroke-width=".8"/></g></svg>
<svg style="left:327.5px;top:136px" width="17" height="15" viewBox="0 0 17 15"><path d="M0.6 13.4V4.2Q0.6 3.4 1.4 3.4H4.6L6 5H11.4Q12.2 5 12.2 5.8V7.4" fill="#f6d58a" stroke="#c07f1e" stroke-width="1.1" stroke-linejoin="round"/><path d="M0.6 13.5L4 7.5H15.4L11.6 13.5Z" fill="#fbe7ae" stroke="#c07f1e" stroke-width="1.1" stroke-linejoin="round"/><rect x="11.5" y="9.5" width="4.6" height="5" fill="#c9d7f0" stroke="#7a8ab4" stroke-width=".9"/><path d="M12.6 9.5V8.4H15V9.5" fill="none" stroke="#7a8ab4" stroke-width=".9"/></svg>
<svg style="left:351.5px;top:136.5px" width="14.6" height="14.6" viewBox="0 0 14.6 14.6"><defs><linearGradient id="rg351" x1="0" y1="0" x2="0" y2="1"><stop offset="0" stop-color="#acacac"/><stop offset="1" stop-color="#a4a4a4"/></linearGradient></defs><circle cx="7.3" cy="7.3" r="6.4" fill="url(#rg351)" stroke="#9c9c9c" stroke-width="1.5"/><path d="M4.359999999999999 3.0999999999999996L11.5 7.3L4.359999999999999 11.5Z" fill="#fff"/></svg>
<svg style="left:374.5px;top:142px" width="8" height="4" viewBox="0 0 8 4"><path d="M0 0H7.6L3.8 4Z" fill="#606060"/></svg>
<div class="abs" style="left:387px;top:135px;width:1px;height:17px;background:#9a9a9a"></div>
<svg style="left:396px;top:135.5px" width="17" height="15" viewBox="0 0 17 15"><path d="M0.6 13.6V5.2Q0.6 4.4 1.4 4.4H4.6L6 6H12.4Q13.2 6 13.2 6.8V13.6Z" fill="#f8dc96" stroke="#c07f1e" stroke-width="1.1" stroke-linejoin="round"/><path d="M1.4 8H12.6" stroke="#fbeec8" stroke-width="1.2"/><g transform="translate(12.6 3.8)"><path d="M0 -3.8L1.5 -1.5L3.8 0L1.5 1.5L0 3.8L-1.5 1.5L-3.8 0L-1.5 -1.5Z" fill="#fbefb8" stroke="#b58a22" stroke-width="1.2" stroke-linejoin="round"/><path d="M0 -2.2V2.2M-2.2 0H2.2" stroke="#fffdf2" stroke-width="1.2"/></g></svg>
<div class="abs" style="left:419px;top:135px;width:1px;height:17px;background:#9a9a9a"></div>
<svg style="left:430px;top:137.5px" width="14" height="13" viewBox="0 0 14 13"><rect x="0.5" y="0.5" width="9.5" height="9" fill="#cfdcee" stroke="#8fa6c8"/><rect x="2.8" y="2.8" width="10.4" height="9.7" fill="#d6e4f6" stroke="#7f98c0"/><path d="M4.8 7.8H11.2" stroke="#1f4f9f" stroke-width="1.5"/></svg>
<svg style="left:452px;top:137.5px" width="14" height="13" viewBox="0 0 14 13"><rect x="0.5" y="0.5" width="9.5" height="9" fill="#cfdcee" stroke="#8fa6c8"/><rect x="2.8" y="2.8" width="10.4" height="9.7" fill="#f2f7fd" stroke="#5f82b4"/><path d="M4.8 7.8H11.2M8 4.6V11" stroke="#1f4f9f" stroke-width="1.5"/></svg>
<svg style="left:481.5px;top:138.9px" width="10" height="5" viewBox="0 0 10 5"><path d="M0.6 0.5H9.4L5 4.6Z" fill="#fff" stroke="#5a5a5a" stroke-width=".9" stroke-linejoin="round"/></svg>
<div class="abs" style="left:258px;top:155px;width:243px;height:20px;background:#fff;border:1px solid #999da6"></div>
<span class="t" style="left:260.5px;top:157.5px;color:#666"><span class="r" style="width:40.98px;transform:scaleX(0.686)">フィルター</span><span class="r" style="width:24.02px">入力</span></span>
<svg style="left:278px;top:182.3px" width="15" height="12.4" viewBox="0 0 16 14"><path d="M0.6 13.4V4.2Q0.6 3.4 1.4 3.4H4.6L6 5H11.4Q12.2 5 12.2 5.8V7.4" fill="#f6d58a" stroke="#c07f1e" stroke-width="1.1" stroke-linejoin="round"/><path d="M0.6 13.5L4 7.5H15.4L11.6 13.5Z" fill="#fbe7ae" stroke="#c07f1e" stroke-width="1.1" stroke-linejoin="round"/></svg>
<span class="t" style="left:298px;top:181px;"><span class="r" style="width:61px;transform:scaleX(0.726)">カテゴリーなし</span></span>
<div class="panel" style="left:2px;top:471px;width:501px;height:240px;border-radius:7px 7px 4px 4px;border:1px solid #fff"><div class="abs" style="left:0;top:0;right:0;height:25px;background:#f5f6fc"></div><div class="abs" style="left:-1px;top:-1px;width:75px;height:27px;background:linear-gradient(#d4dde9,#fff 98%);border-radius:7px 9px 0 0"></div></div>
<svg style="left:6.8px;top:477px" width="15" height="15" viewBox="0 0 15 15"><path d="M0.5 0.5H12.6Q14.4 3.6 12.8 7.4Q12.2 11 14.2 14.5H0.5Z" fill="#e9f0fa" stroke="#8c9cc0" stroke-width="1"/><path d="M0.5 14.5V0.5H12.6" fill="none" stroke="#c4ac6c" stroke-width="1.1"/><path d="M0.5 7.5H13M9.4 0.5V14.5" stroke="#8aa0cc" stroke-width="1"/><circle cx="5" cy="4" r="2.7" fill="#e2303a"/><circle cx="4.6" cy="3.6" r="1.2" fill="#f06a70"/><path d="M2.4 13.6Q2.4 9.6 5 9.2Q7.6 9.6 7.6 13.6Z" fill="#f7a52a"/><path d="M3.8 13Q4 11 5 10.6Q6 11 6.2 13Z" fill="#fdd880"/></svg>
<span class="t" style="left:27px;top:476.5px;"><span class="r" style="width:23.5px;transform:scaleX(0.979)">問題</span></span>
<svg style="left:57.8px;top:479.7px" width="10.4" height="10.4" viewBox="0 0 11 11"><path d="M0.6 2.4L2.4 0.6L5.5 3.7L8.6 0.6L10.4 2.4L7.3 5.5L10.4 8.6L8.6 10.4L5.5 7.3L2.4 10.4L0.6 8.6L3.7 5.5Z" fill="#fff" stroke="#484848" stroke-width="1.05" stroke-linejoin="miter"/></svg>
<svg style="left:372px;top:477px" width="17" height="15" viewBox="0 0 17 15"><g stroke="#2f6a96" stroke-width="1.1" fill="none"><path d="M0.5 2.5H6M4 0.6L6.2 2.5L4 4.4"/><path d="M0.5 12.5H6M4 10.6L6.2 12.5L4 14.4"/><path d="M9 0V5.4M9 9.6V15" stroke="#3a4a5a" stroke-width=".9"/></g><path d="M4.6 6H10.6V3.6L16 7.5L10.6 11.4V9H4.6Z" fill="#fdf0c0" stroke="#c8901e" stroke-width="1.1" stroke-linejoin="round"/></svg>
<div class="abs" style="left:394px;top:475px;width:1px;height:18px;background:#9a9a9a"></div>
<svg style="left:404.6px;top:477.6px" width="14" height="14" viewBox="0 0 14 14"><circle cx="3.6" cy="3.6" r="3.3" fill="#d2d2d2"/><ellipse cx="3.4" cy="2.4" rx="2.2" ry="1.1" fill="#f6f6f6"/><circle cx="10.2" cy="5.6" r="3.2" fill="#b0b0b0"/><ellipse cx="10" cy="4.2" rx="2.1" ry="1" fill="#e8e8e8"/><circle cx="4.6" cy="9.8" r="3.5" fill="#989898"/><ellipse cx="4.4" cy="8.2" rx="2.4" ry="1.1" fill="#dcdcdc"/></svg>
<svg style="left:435px;top:478.9px" width="10" height="5" viewBox="0 0 10 5"><path d="M0.6 0.5H9.4L5 4.6Z" fill="#fff" stroke="#5a5a5a" stroke-width=".9" stroke-linejoin="round"/></svg>
<svg style="left:455px;top:479px" width="10" height="4" viewBox="0 0 10 4"><rect x="0.5" y="0.5" width="9" height="3" fill="#fff" stroke="#5a5a5a"/></svg>
<svg style="left:478px;top:479px" width="10" height="10" viewBox="0 0 10 10"><rect x="0.5" y="0.5" width="9" height="9" fill="#fff" stroke="#5a5a5a"/><path d="M0.5 2.5H9.5" stroke="#5a5a5a"/></svg>
<span class="t" style="left:5px;top:498.5px;"><span class="r" style="width:8.6px;transform:scaleX(0.858)">0 </span><span class="r" style="width:22.4px;transform:scaleX(0.933)">項目</span></span>
<div class="abs" style="left:5px;top:514px;width:495px;height:1px;background:#8a8a8a"></div>
<span class="t" style="left:12px;top:519.5px;"><span class="r" style="width:23px;transform:scaleX(0.958)">説明</span></span>
<svg style="left:151.5px;top:516px" width="9" height="5" viewBox="0 0 9 5"><path d="M0.6 4.4L4.5 0.8L8.4 4.4" fill="none" stroke="#5a5a5a" stroke-width="1"/></svg>
<span class="t" style="left:311px;top:520px;"><span class="r" style="width:34px;transform:scaleX(0.717)">リソース</span></span>
<span class="t" style="left:401.5px;top:520px;"><span class="r" style="width:18.5px;transform:scaleX(0.770)">パス</span></span>
<div class="abs" style="left:5px;top:540px;width:299px;height:152px;background:#f5f5f5"></div>
<div class="abs" style="left:5px;top:557px;width:495px;height:1px;background:#e6e6e6"></div>
<div class="abs" style="left:5px;top:575px;width:495px;height:1px;background:#e6e6e6"></div>
<div class="abs" style="left:5px;top:593px;width:495px;height:1px;background:#e6e6e6"></div>
<div class="abs" style="left:5px;top:611px;width:495px;height:1px;background:#e6e6e6"></div>
<div class="abs" style="left:5px;top:629px;width:495px;height:1px;background:#e6e6e6"></div>
<div class="abs" style="left:5px;top:647px;width:495px;height:1px;background:#e6e6e6"></div>
<div class="abs" style="left:5px;top:665px;width:495px;height:1px;background:#e6e6e6"></div>
<div class="abs" style="left:5px;top:683px;width:495px;height:1px;background:#e6e6e6"></div>
<div class="abs" style="left:304px;top:515px;width:1px;height:177px;background:#e2e2e2"></div>
<div class="abs" style="left:394px;top:515px;width:1px;height:177px;background:#e2e2e2"></div>
<div class="abs" style="left:5px;top:692px;width:495px;height:17px;background:#f0f0f0"></div>
<div class="abs" style="left:22px;top:692px;width:331px;height:17px;background:#c8c8c8"></div>
<svg style="left:10px;top:696px" width="6" height="9" viewBox="0 0 6 9"><path d="M5 0.8L1.2 4.5L5 8.2" fill="none" stroke="#404040" stroke-width="1.7"/></svg>
<svg style="left:488.5px;top:696px" width="6" height="9" viewBox="0 0 6 9"><path d="M1 0.8L4.8 4.5L1 8.2" fill="none" stroke="#404040" stroke-width="1.7"/></svg>
<div class="panel" style="left:507px;top:105px;width:501px;height:606px;border-radius:8px 8px 4px 4px;border:1px solid #bcbfc8"><div class="abs" style="left:0;top:0;right:0;height:25px;background:linear-gradient(#d6e3f3,#cbdcf0)"></div><div class="abs" style="left:-1px;top:-1px;width:112px;height:27px;background:#fff;border-radius:8px 0px 0 0"></div></div>
<div class="abs" style="left:618px;top:130px;width:389px;height:1px;background:#aab6ca"></div>
<div class="abs" style="left:618px;top:109px;width:1px;height:21px;background:#aab6ca"></div>
<svg style="left:515px;top:113px" width="11" height="13" viewBox="0 0 11 13"><path d="M0.6 0.6H7.4L10.4 3.6V12.4H0.6Z" fill="#f4f8fe" stroke="#9a7c30" stroke-width="1.1"/><path d="M7.4 0.6V3.6H10.4Z" fill="#e8c878" stroke="#9a7c30" stroke-width=".6"/><path d="M6.6 3.6V8.2Q6.6 10.2 4.6 10.2Q3.6 10.2 3 9.6" fill="none" stroke="#2f62a8" stroke-width="1.7"/></svg>
<span class="t" style="left:531.5px;top:111.5px;"><span class="r" style="width:60.5px;transform:scaleX(0.916)">class01.java</span></span>
<svg style="left:600.8px;top:113.8px" width="10.4" height="10.4" viewBox="0 0 11 11"><path d="M0.6 2.4L2.4 0.6L5.5 3.7L8.6 0.6L10.4 2.4L7.3 5.5L10.4 8.6L8.6 10.4L5.5 7.3L2.4 10.4L0.6 8.6L3.7 5.5Z" fill="#fff" stroke="#484848" stroke-width="1.05" stroke-linejoin="miter"/></svg>
<svg style="left:960px;top:113px" width="10" height="4" viewBox="0 0 10 4"><rect x="0.5" y="0.5" width="9" height="3" fill="#fff" stroke="#5a5a5a"/></svg>
<svg style="left:983px;top:113px" width="10" height="10" viewBox="0 0 10 10"><rect x="0.5" y="0.5" width="9" height="9" fill="#fff" stroke="#5a5a5a"/><path d="M0.5 2.5H9.5" stroke="#5a5a5a"/></svg>
<div class="abs" style="left:510px;top:132px;width:12px;height:578px;background:#f8f8f8"></div>
<div class="abs" style="left:543px;top:132px;width:1px;height:561px;background:#f0f0f0"></div>
<div class="abs" style="left:546px;top:133px;width:429px;height:12px;background:#e8f2fe"></div>
<div class="abs" style="left:546px;top:133px;width:2px;height:12px;background:#000"></div>
<div class="abs" style="left:976px;top:132px;width:16px;height:578px;background:#f0f0f0"></div>
<div class="abs" style="left:992px;top:132px;width:13px;height:578px;background:#f8f8f8"></div>
<div class="abs" style="left:508px;top:692px;width:36px;height:18px;background:#f8f8f8"></div>
<div class="abs" style="left:544px;top:693px;width:448px;height:17px;background:#f0f0f0"></div>
<svg style="left:979.5px;top:138.5px" width="9" height="6" viewBox="0 0 9 6"><path d="M0.8 5L4.5 1.2L8.2 5" fill="none" stroke="#b0b0b0" stroke-width="1.7"/></svg>
<svg style="left:979.5px;top:679.5px" width="9" height="6" viewBox="0 0 9 6"><path d="M0.8 1L4.5 4.8L8.2 1" fill="none" stroke="#b0b0b0" stroke-width="1.7"/></svg>
<svg style="left:549px;top:696.5px" width="6" height="9" viewBox="0 0 6 9"><path d="M5 0.8L1.2 4.5L5 8.2" fill="none" stroke="#b0b0b0" stroke-width="1.7"/></svg>
<svg style="left:963px;top:696.5px" width="6" height="9" viewBox="0 0 6 9"><path d="M1 0.8L4.8 4.5L1 8.2" fill="none" stroke="#b0b0b0" stroke-width="1.7"/></svg>
<div class="abs" style="left:994px;top:293px;width:9px;height:5px;background:#b9d3f3;border:1px solid #2f8cff"></div>
<div class="code ln" style="left:500px;width:33px;top:132px;text-align:right">1</div>
<div class="code" style="left:546px;top:132px"><span class="jd">/**</span></div>
<div class="code ln" style="left:500px;width:33px;top:144px;text-align:right">4</div>
<div class="code" style="left:546px;top:144px"><b class="kw">package</b> test1;<span class="nl">↵</span></div>
<div class="code ln" style="left:500px;width:33px;top:156px;text-align:right">5</div>
<div class="code" style="left:546px;top:156px"><span class="nl">↵</span></div>
<div class="code ln" style="left:500px;width:33px;top:168px;text-align:right">6</div>
<div class="code" style="left:546px;top:168px"><span class="jd">/**</span><span class="nl">↵</span></div>
<div class="code ln" style="left:500px;width:33px;top:180px;text-align:right">7</div>
<div class="code" style="left:546px;top:180px"><span class="jd"> * </span><b class="jt">@author</b><span class="jd"> yamada</span><span class="nl">↵</span></div>
<div class="code ln" style="left:500px;width:33px;top:192px;text-align:right">8</div>
<div class="code" style="left:546px;top:192px"><span class="jd"> *</span><span class="nl">↵</span></div>
<div class="code ln" style="left:500px;width:33px;top:204px;text-align:right">9</div>
<div class="code" style="left:546px;top:204px"><span class="jd"> */</span><span class="nl">↵</span></div>
<div class="code ln" style="left:500px;width:33px;top:216px;text-align:right">10</div>
<div class="code" style="left:546px;top:216px"><b class="kw">public</b> <b class="kw">class</b> class01 {<span class="nl">↵</span></div>
<div class="code ln" style="left:500px;width:33px;top:228px;text-align:right">11</div>
<div class="code" style="left:546px;top:228px"><span class="nl">↵</span></div>
<div class="code ln" style="left:500px;width:33px;top:240px;text-align:right">12</div>
<div class="code" style="left:546px;top:240px">    <span class="jd">/**</span><span class="nl">↵</span></div>
<div class="code ln" style="left:500px;width:33px;top:252px;text-align:right">13</div>
<div class="code" style="left:546px;top:252px">    <span class="jd"> * </span><b class="jt">@param</b><span class="jd"> args</span><span class="nl">↵</span></div>
<div class="code ln" style="left:500px;width:33px;top:264px;text-align:right">14</div>
<div class="code" style="left:546px;top:264px">    <span class="jd"> */</span><span class="nl">↵</span></div>
<div class="code ln" style="left:500px;width:33px;top:276px;text-align:right">15</div>
<div class="code" style="left:546px;top:276px">    <b class="kw">public</b> <b class="kw">static</b> <b class="kw">void</b> main(String[] <span class="pa">args</span>) {<span class="nl">↵</span></div>
<div class="code ln" style="left:500px;width:33px;top:288px;text-align:right">16</div>
<div class="code" style="left:546px;top:288px">        <span class="cm">// </span><b class="jt">TODO</b><span class="cm"> <span class="j">自動生成されたメソッド・スタブ</span></span><span class="nl">↵</span></div>
<div class="code ln" style="left:500px;width:33px;top:300px;text-align:right">17</div>
<div class="code" style="left:546px;top:300px"><span class="nl">↵</span></div>
<div class="code ln" style="left:500px;width:33px;top:312px;text-align:right">18</div>
<div class="code" style="left:546px;top:312px">    }<span class="nl">↵</span></div>
<div class="code ln" style="left:500px;width:33px;top:324px;text-align:right">19</div>
<div class="code" style="left:546px;top:324px"><span class="nl">↵</span></div>
<div class="code ln" style="left:500px;width:33px;top:336px;text-align:right">20</div>
<div class="code" style="left:546px;top:336px">}<span class="nl">↵</span></div>
<div class="code ln" style="left:500px;width:33px;top:348px;text-align:right">21</div>
<div class="code" style="left:546px;top:348px"></div>
<svg style="left:546.6px;top:241.2px" width="4" height="3" viewBox="0 0 4 3"><path d="M0.3 2.3L1.8 0.6L3.3 2.3" fill="none" stroke="#b6b6b6" stroke-width="1"/></svg>
<svg style="left:546.6px;top:253.2px" width="4" height="3" viewBox="0 0 4 3"><path d="M0.3 2.3L1.8 0.6L3.3 2.3" fill="none" stroke="#b6b6b6" stroke-width="1"/></svg>
<svg style="left:546.6px;top:265.2px" width="4" height="3" viewBox="0 0 4 3"><path d="M0.3 2.3L1.8 0.6L3.3 2.3" fill="none" stroke="#b6b6b6" stroke-width="1"/></svg>
<svg style="left:546.6px;top:277.2px" width="4" height="3" viewBox="0 0 4 3"><path d="M0.3 2.3L1.8 0.6L3.3 2.3" fill="none" stroke="#b6b6b6" stroke-width="1"/></svg>
<svg style="left:546.6px;top:289.2px" width="4" height="3" viewBox="0 0 4 3"><path d="M0.3 2.3L1.8 0.6L3.3 2.3" fill="none" stroke="#b6b6b6" stroke-width="1"/></svg>
<svg style="left:570.6px;top:289.2px" width="4" height="3" viewBox="0 0 4 3"><path d="M0.3 2.3L1.8 0.6L3.3 2.3" fill="none" stroke="#b6b6b6" stroke-width="1"/></svg>
<svg style="left:546.6px;top:313.2px" width="4" height="3" viewBox="0 0 4 3"><path d="M0.3 2.3L1.8 0.6L3.3 2.3" fill="none" stroke="#b6b6b6" stroke-width="1"/></svg>
<svg style="left:534px;top:134px" width="9" height="9" viewBox="0 0 9 9"><circle cx="4.5" cy="4.5" r="4" fill="#eaf1f9" stroke="#a3b3c6" stroke-width="1"/><path d="M2.2 4.5H6.8" stroke="#1c2c50" stroke-width="1.2"/><path d="M4.5 2.2V6.8" stroke="#1c2c50" stroke-width="1.2"/></svg>
<svg style="left:534px;top:170px" width="9" height="9" viewBox="0 0 9 9"><circle cx="4.5" cy="4.5" r="4" fill="#eaf1f9" stroke="#a3b3c6" stroke-width="1"/><path d="M2.2 4.5H6.8" stroke="#1c2c50" stroke-width="1.2"/></svg>
<svg style="left:534px;top:242px" width="9" height="9" viewBox="0 0 9 9"><circle cx="4.5" cy="4.5" r="4" fill="#eaf1f9" stroke="#a3b3c6" stroke-width="1"/><path d="M2.2 4.5H6.8" stroke="#1c2c50" stroke-width="1.2"/></svg>
<svg style="left:534px;top:278px" width="9" height="9" viewBox="0 0 9 9"><circle cx="4.5" cy="4.5" r="4" fill="#eaf1f9" stroke="#a3b3c6" stroke-width="1"/><path d="M2.2 4.5H6.8" stroke="#1c2c50" stroke-width="1.2"/></svg>
<svg style="left:507px;top:287px" width="15" height="15" viewBox="0 0 15 15"><rect x="1.5" y="3.5" width="13" height="11" fill="#fafafa" stroke="#c9aa6a"/><path d="M4.2 4.4L5.4 0.5H10.6L11.8 4.4Z" fill="#8b9dc3"/><path d="M2.6 8.2L5 10.6L9.4 5.6" fill="none" stroke="#1a6aff" stroke-width="1.8"/><path d="M9.6 7.6H13M8.6 9.6H13M8 11.6H13" stroke="#5f7fc4" stroke-width=".9"/></svg>
<div class="abs" style="left:508px;top:104px;width:344px;height:274px;border:5px solid #ed1c24"></div>
<svg style="left:2px;top:717px" width="3" height="21" viewBox="0 0 3 21"><rect x="0.6" y="0.6" width="2.4" height="2.4" fill="#fafbfe"/><rect x="0" y="0" width="2" height="2" fill="#9a917e"/><rect x="0" y="0" width="2" height="0.8" fill="#b8b2a2"/><rect x="0.6" y="5.6" width="2.4" height="2.4" fill="#fafbfe"/><rect x="0" y="5" width="2" height="2" fill="#9a917e"/><rect x="0" y="5" width="2" height="0.8" fill="#b8b2a2"/><rect x="0.6" y="9.6" width="2.4" height="2.4" fill="#fafbfe"/><rect x="0" y="9" width="2" height="2" fill="#9a917e"/><rect x="0" y="9" width="2" height="0.8" fill="#b8b2a2"/><rect x="0.6" y="13.6" width="2.4" height="3.4" fill="#fafbfe"/><rect x="0" y="13" width="2" height="3" fill="#9a917e"/><rect x="0" y="13" width="2" height="0.8" fill="#b8b2a2"/></svg>
<svg style="left:2px;top:740px" width="3" height="21" viewBox="0 0 3 21"><rect x="0.6" y="0.6" width="2.4" height="2.4" fill="#fafbfe"/><rect x="0" y="0" width="2" height="2" fill="#9a917e"/><rect x="0" y="0" width="2" height="0.8" fill="#b8b2a2"/><rect x="0.6" y="5.6" width="2.4" height="2.4" fill="#fafbfe"/><rect x="0" y="5" width="2" height="2" fill="#9a917e"/><rect x="0" y="5" width="2" height="0.8" fill="#b8b2a2"/><rect x="0.6" y="9.6" width="2.4" height="2.4" fill="#fafbfe"/><rect x="0" y="9" width="2" height="2" fill="#9a917e"/><rect x="0" y="9" width="2" height="0.8" fill="#b8b2a2"/><rect x="0.6" y="13.6" width="2.4" height="3.4" fill="#fafbfe"/><rect x="0" y="13" width="2" height="3" fill="#9a917e"/><rect x="0" y="13" width="2" height="0.8" fill="#b8b2a2"/></svg>
<span class="t" style="left:14px;top:716.5px;"><span class="r" style="width:30.5px;transform:scaleX(0.897)">UTF-8</span></span>
<div class="abs" style="left:126px;top:714px;width:1px;height:22px;background:#7a7a7a"></div>
<span class="t" style="left:136px;top:716.5px;"><span class="r" style="width:25.5px;transform:scaleX(0.814)">CRLF</span></span>
<svg style="left:179px;top:717px" width="3" height="21" viewBox="0 0 3 21"><rect x="0.6" y="0.6" width="2.4" height="2.4" fill="#fafbfe"/><rect x="0" y="0" width="2" height="2" fill="#9a917e"/><rect x="0" y="0" width="2" height="0.8" fill="#b8b2a2"/><rect x="0.6" y="5.6" width="2.4" height="2.4" fill="#fafbfe"/><rect x="0" y="5" width="2" height="2" fill="#9a917e"/><rect x="0" y="5" width="2" height="0.8" fill="#b8b2a2"/><rect x="0.6" y="9.6" width="2.4" height="2.4" fill="#fafbfe"/><rect x="0" y="9" width="2" height="2" fill="#9a917e"/><rect x="0" y="9" width="2" height="0.8" fill="#b8b2a2"/><rect x="0.6" y="13.6" width="2.4" height="3.4" fill="#fafbfe"/><rect x="0" y="13" width="2" height="3" fill="#9a917e"/><rect x="0" y="13" width="2" height="0.8" fill="#b8b2a2"/></svg>
<svg style="left:189px;top:718px" width="11" height="15" viewBox="0 0 11 15"><path d="M5.5 0.6Q10.2 0.6 10.2 5Q10.2 7 8.6 8.6Q7.8 9.6 7.8 10.6H3.2Q3.2 9.6 2.4 8.6Q0.8 7 0.8 5Q0.8 0.6 5.5 0.6Z" fill="#fbe89a" stroke="#e0b040" stroke-width="1"/><path d="M4 3Q2.8 4 3 6" fill="none" stroke="#fff" stroke-width="1.2"/><rect x="3.4" y="11" width="4.2" height="1.4" fill="#8a94a8"/><rect x="3.4" y="12.8" width="4.2" height="1.2" fill="#6a7488"/><rect x="4.4" y="14" width="2.2" height="0.9" fill="#4a5468"/></svg>
<div class="abs" style="left:560px;top:712px;width:1px;height:23px;background:#8a8a8a"></div>
<span class="t" style="left:568px;top:715px;"><span class="r" style="width:12.02px">書</span><span class="r" style="width:9.98px;transform:scaleX(0.830)">き</span><span class="r" style="width:12.02px">込</span><span class="r" style="width:9.98px;transform:scaleX(0.830)">み</span><span class="r" style="width:24.02px">可能</span></span>
<div class="abs" style="left:664px;top:712px;width:1px;height:23px;background:#8a8a8a"></div>
<span class="t" style="left:671.5px;top:715px;"><span class="r" style="width:33.48px;transform:scaleX(0.703)">スマート</span><span class="r" style="width:24.02px">挿入</span></span>
<div class="abs" style="left:762px;top:712px;width:1px;height:23px;background:#8a8a8a"></div>
<span class="t" style="left:770.5px;top:715px;"><span class="r" style="width:19.5px;transform:scaleX(0.835)">1 : 1</span></span>
<svg style="left:858px;top:716px" width="3" height="23" viewBox="0 0 3 23"><rect x="0.6" y="0.6" width="2.4" height="2.4" fill="#fafbfe"/><rect x="0" y="0" width="2" height="2" fill="#9a917e"/><rect x="0" y="0" width="2" height="0.8" fill="#b8b2a2"/><rect x="0.6" y="4.6" width="2.4" height="2.4" fill="#fafbfe"/><rect x="0" y="4" width="2" height="2" fill="#9a917e"/><rect x="0" y="4" width="2" height="0.8" fill="#b8b2a2"/><rect x="0.6" y="8.6" width="2.4" height="2.4" fill="#fafbfe"/><rect x="0" y="8" width="2" height="2" fill="#9a917e"/><rect x="0" y="8" width="2" height="0.8" fill="#b8b2a2"/><rect x="0.6" y="12.6" width="2.4" height="2.4" fill="#fafbfe"/><rect x="0" y="12" width="2" height="2" fill="#9a917e"/><rect x="0" y="12" width="2" height="0.8" fill="#b8b2a2"/><rect x="0.6" y="16.6" width="2.4" height="3.4" fill="#fafbfe"/><rect x="0" y="16" width="2" height="3" fill="#9a917e"/><rect x="0" y="16" width="2" height="0.8" fill="#b8b2a2"/></svg>
<div class="abs" style="left:862px;top:714px;width:130px;height:22px;background:#f0f0f0;border-top:1px solid #a0a0a0"></div>
<div class="abs" style="left:862px;top:715px;width:20px;height:21px;background:#a0a0a0"></div>
<div class="abs" style="left:882px;top:715px;width:32px;height:21px;background:#fdb56e"></div>
<div class="abs" style="left:984px;top:715px;width:1px;height:21px;background:#e83030"></div>
<div class="abs" style="left:991px;top:714px;width:1px;height:22px;background:#8a8a8a"></div>
<span class="t" style="left:894.5px;top:717px;"><span class="r" style="width:68px;transform:scaleX(0.983)">310M / 811M</span></span>
<svg style="left:994.5px;top:718px" width="11" height="15" viewBox="0 0 11 15"><path d="M1.2 3.5L2 14.2H9L9.8 3.5Z" fill="#cfe0f6" stroke="#5f82b4" stroke-width="1.1"/><path d="M4 5V12.6M5.5 5V12.6M7 5V12.6" stroke="#5f82b4" stroke-width=".9"/><path d="M0.4 2.6H10.6" stroke="#5f82b4" stroke-width="1.4"/><path d="M3.6 2.4Q5.5 0 7.4 2.4" fill="none" stroke="#5f82b4" stroke-width="1"/></svg>
<div class="abs" style="left:0px;top:0px;width:1px;height:761px;background:#3a982e"></div>
<div class="abs" style="left:1009px;top:0px;width:1px;height:761px;background:#3a982e"></div>
<div class="abs" style="left:0px;top:760px;width:1010px;height:1px;background:#3a982e"></div>
</body>
</html>
